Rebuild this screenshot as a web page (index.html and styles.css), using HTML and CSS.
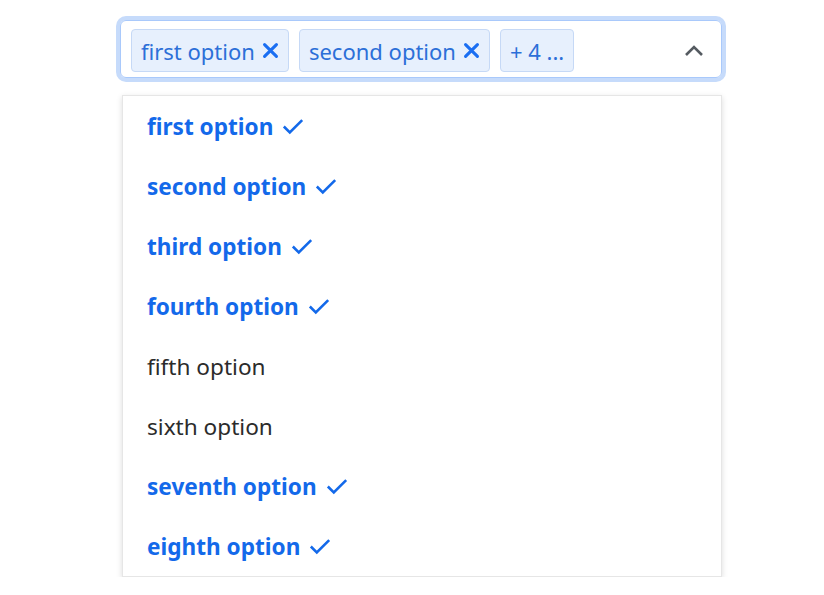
FILE: index.html
```html
<!DOCTYPE html>
<html>
<head>
<meta charset="utf-8">
<link rel="stylesheet" href="styles.css">
</head>
<body>
<div class="wrap">
  <div class="control">
    <div class="tags">
      <span class="tag">first option<svg class="x" viewBox="0 0 16 16"><path d="M3 3L13 13M13 3L3 13"/></svg></span>
      <span class="tag">second option<svg class="x" viewBox="0 0 16 16"><path d="M3 3L13 13M13 3L3 13"/></svg></span>
      <span class="tag more">+ 4 ...</span>
    </div>
    <svg class="chev" viewBox="0 0 20 12"><path d="M2 10L10 2L18 10"/></svg>
  </div>
  <ul class="menu">
    <li class="opt sel">first option<svg class="chk" viewBox="0 0 24 18"><path d="M2 9L8.5 15.5L22 2"/></svg></li>
    <li class="opt sel">second option<svg class="chk" viewBox="0 0 24 18"><path d="M2 9L8.5 15.5L22 2"/></svg></li>
    <li class="opt sel">third option<svg class="chk" viewBox="0 0 24 18"><path d="M2 9L8.5 15.5L22 2"/></svg></li>
    <li class="opt sel">fourth option<svg class="chk" viewBox="0 0 24 18"><path d="M2 9L8.5 15.5L22 2"/></svg></li>
    <li class="opt">fifth option</li>
    <li class="opt">sixth option</li>
    <li class="opt sel">seventh option<svg class="chk" viewBox="0 0 24 18"><path d="M2 9L8.5 15.5L22 2"/></svg></li>
    <li class="opt sel">eighth option<svg class="chk" viewBox="0 0 24 18"><path d="M2 9L8.5 15.5L22 2"/></svg></li>
  </ul>
</div>
</body>
</html>
```

FILE: styles.css
```css
html, body {
  margin: 0;
  padding: 0;
  background: #ffffff;
}
body {
  font-family: "Noto Sans", "Open Sans", sans-serif;
  font-size: 22px;
  color: #212529;
}
.wrap {
  padding-top: 20px;
  padding-left: 120px;
  width: 602px;
}
.control {
  box-sizing: border-box;
  height: 58px;
  border: 1px solid #a9c9fb;
  border-radius: 6px;
  box-shadow: 0 0 0 4px #c6dbfb;
  display: flex;
  align-items: flex-start;
  padding: 8px 16px 0 10px;
}
.tags {
  flex: 1;
  display: flex;
  gap: 10px;
}
.tag {
  box-sizing: border-box;
  height: 43px;
  display: flex;
  align-items: center;
  padding: 0 8px 0 9px;
  background: #e7f0fd;
  border: 1px solid #c6d9f6;
  border-radius: 4px;
  color: #2c6fd8;
  line-height: 1;
}
.tag.more {
  padding: 0 9px;
}
.x {
  width: 19px;
  height: 19px;
  margin-left: 6px;
  fill: none;
  stroke: #1a6ef2;
  stroke-width: 2.6;
  stroke-linecap: round;
}
.chev {
  width: 20px;
  height: 12px;
  margin-top: 16px;
  margin-right: 1px;
  fill: none;
  stroke: #555b61;
  stroke-width: 2.6;
}
.menu {
  list-style: none;
  margin: 17px 0 0 2px;
  padding: 0;
  width: 600px;
  box-sizing: border-box;
  border: 1px solid #e6e6e6;
  box-shadow: 0 2px 6px rgba(0, 0, 0, 0.14);
  background: #ffffff;
}
.opt {
  height: 60px;
  display: flex;
  align-items: center;
  padding-left: 24px;
  color: #2b2b2b;
  font-size: 22.6px;
}
.opt.sel {
  color: #1369ea;
  font-weight: 700;
}
.chk {
  width: 22px;
  height: 17px;
  margin-left: 9px;
  fill: none;
  stroke: #1369ea;
  stroke-width: 2.8;
}
```
